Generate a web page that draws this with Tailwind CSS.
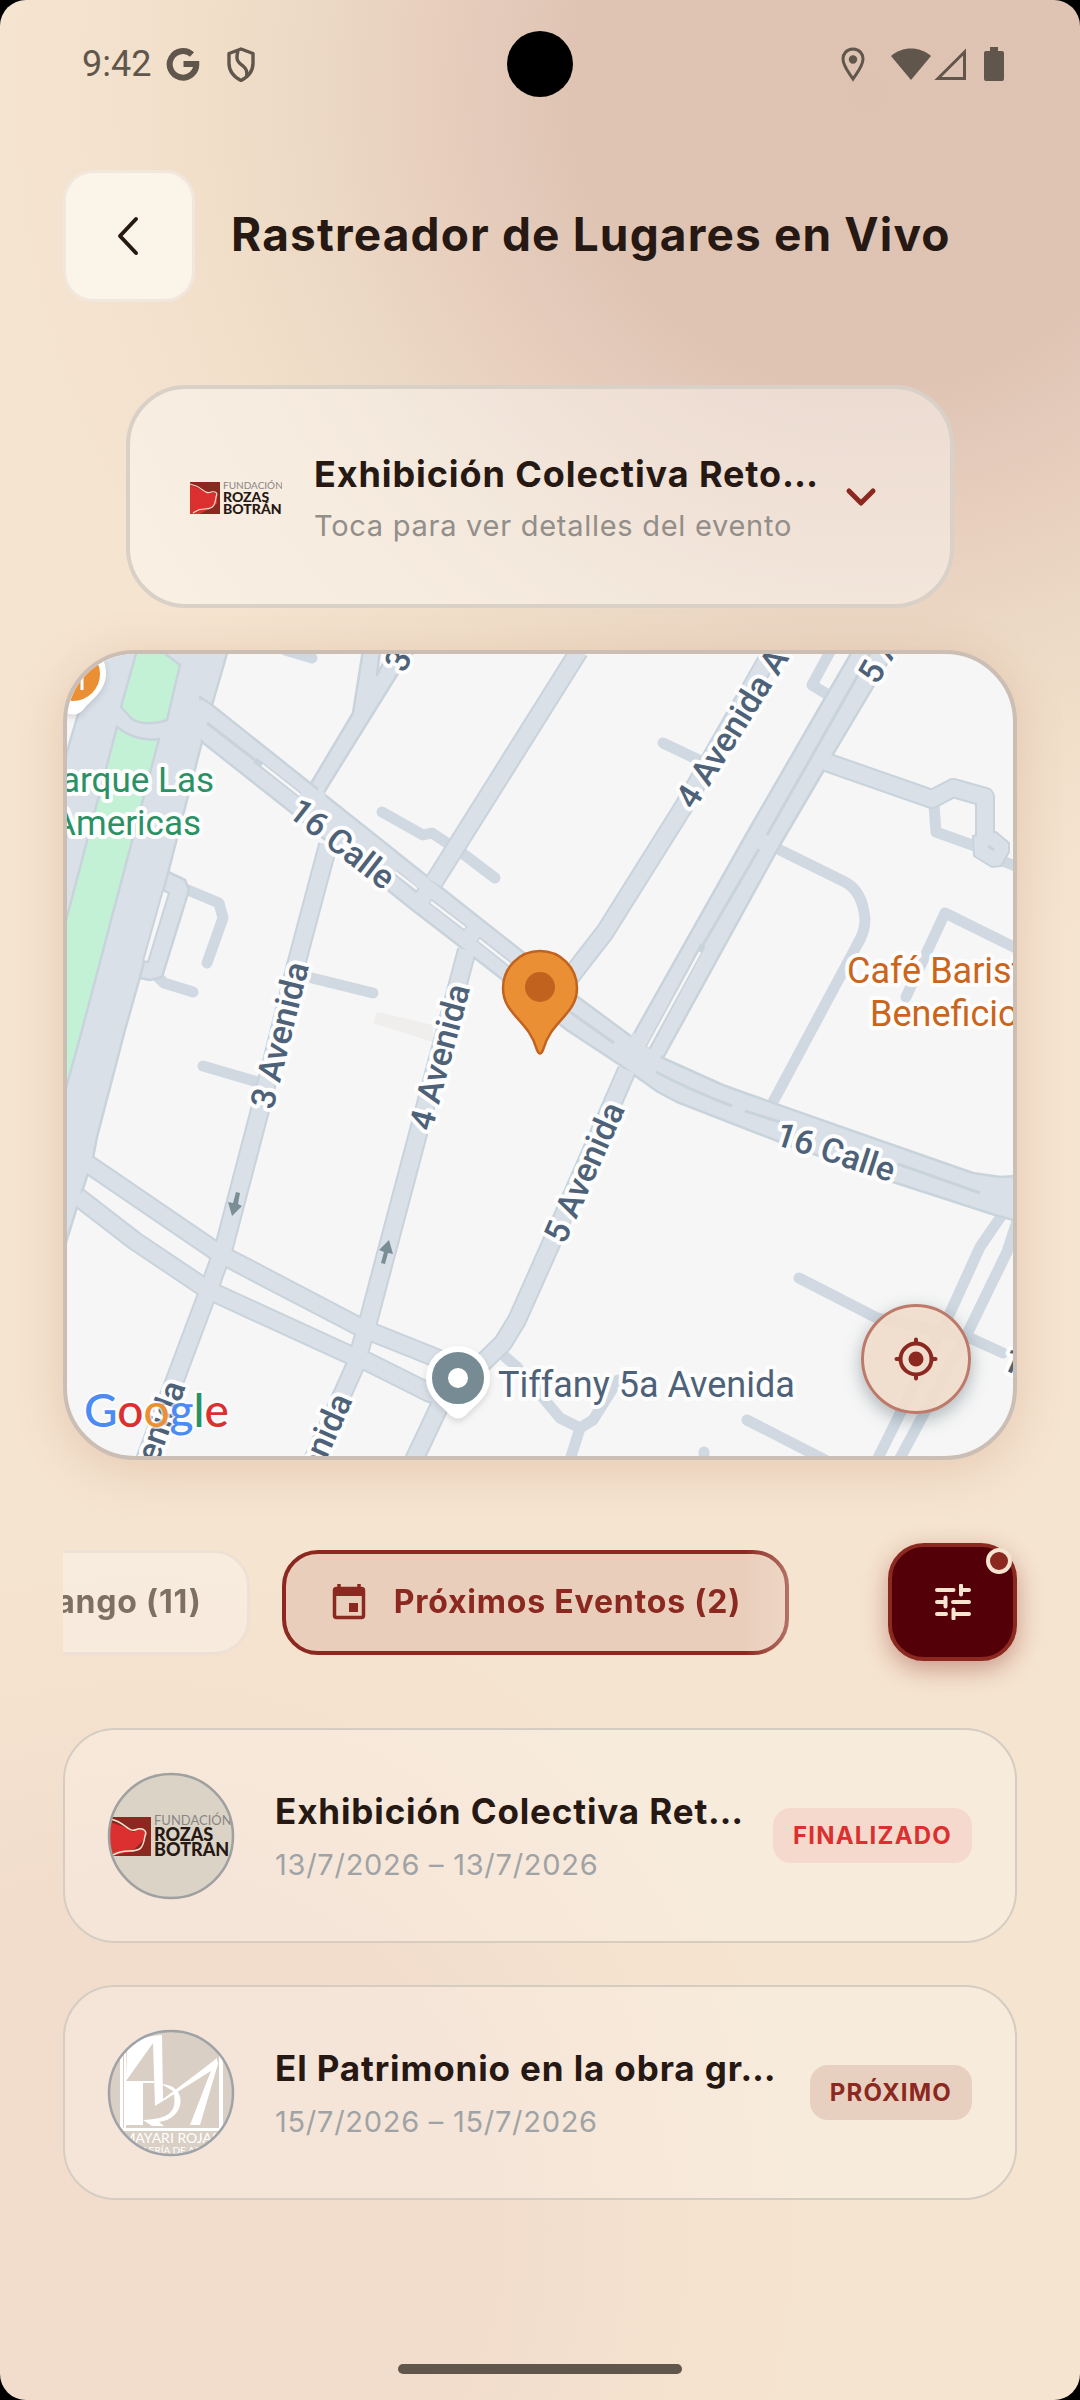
<!DOCTYPE html>
<html lang="es">

<head>
    <meta charset="UTF-8">
    <meta name="viewport" content="width=device-width, initial-scale=1.0">
    <title>Rastreador de Lugares en Vivo</title>
    <script src="https://cdn.jsdelivr.net/npm/@tailwindcss/browser@4"></script>
</head>

<body class="bg-black font-['Inter',sans-serif] text-[#261813]">
<div class="min-h-screen flex flex-col rounded-[26px] overflow-hidden bg-[#f5e4d0] bg-[radial-gradient(circle_860px_at_870px_90px,#dec2b2_0,#dfc4b4_34%,#e8cfbe_52%,#ecd9c5_65%,#f1dfca_78%,#f5e4d000_100%),radial-gradient(circle_660px_at_140px_2230px,#f2dccb_0,#f2dccb_45%,#f5e4d000_100%)]">

    <!-- status bar -->
    <div class="relative h-32 flex items-center justify-between px-[76px] text-[#60564c]">
        <div class="flex items-center pl-1.5">
            <span class="font-['Roboto',sans-serif] text-4xl">9:42</span>
            <svg class="w-9 h-9 ml-3.5" viewBox="0 0 36 36" fill="none" stroke="currentColor" stroke-width="6">
                <path d="M27 8.500A13.300 13.300 0 1 0 31.300 18H18.500"/>
            </svg>
            <svg class="w-9 h-9 ml-5" viewBox="0 0 36 36" fill="none" stroke="currentColor" stroke-width="3.400" stroke-linejoin="round">
                <path d="M20 3L32 7.500V17C32 25 27 31 20 34.500C13 31 8 25 8 17V7.500Z"/>
                <path d="M17 5C14 15 18 17 22 20C26 23 26.500 26 25.500 30"/>
            </svg>
        </div>
        <span class="absolute left-1/2 top-[31px] -translate-x-1/2 size-[66px] rounded-full bg-black"></span>
        <div class="flex items-center">
            <svg class="w-6 h-9" viewBox="0 0 24 36">
                <path d="M12 3C5.500 3 2 8 2 13C2 20 7.500 26 12 33C16.500 26 22 20 22 13C22 8 18.500 3 12 3Z" fill="none" stroke="currentColor" stroke-width="3"/>
                <circle cx="12" cy="13.500" r="4.200" fill="currentColor"/>
            </svg>
            <svg class="w-10 h-9 ml-[26px]" viewBox="0 0 40 36" fill="currentColor"><path d="M0 10C11 0 29 0 40 10L20 34Z"/></svg>
            <svg class="w-8 h-9 ml-[3px]" viewBox="0 0 32 36"><path d="M4 32.500H30.500V6Z" fill="none" stroke="currentColor" stroke-width="3"/></svg>
            <svg class="w-5 h-9 ml-[18px]" viewBox="0 0 20 36" fill="currentColor"><path d="M6 1H14V5H18Q20 5 20 7V33Q20 35 18 35H2Q0 35 0 33V7Q0 5 2 5H6Z"/></svg>
        </div>
    </div>

    <main class="flex-1 flex flex-col px-[63px] pt-[42px]">

        <header class="flex items-center gap-9">
            <button aria-label="Volver" class="shrink-0 size-[132px] rounded-[30px] border-3 border-[#f1e7dd] bg-[#fbf4e9] flex items-center justify-center">
                <svg class="w-12 h-12" viewBox="0 0 48 48" fill="none" stroke="#261813" stroke-width="4" stroke-linecap="round" stroke-linejoin="round"><path d="M31 7L15 24L31 41"/></svg>
            </button>
            <h1 class="pb-1 text-[46px] leading-[60px] font-bold tracking-wide whitespace-nowrap">Rastreador de Lugares en Vivo</h1>
        </header>

        <!-- selected event -->
        <button class="mt-[83px] mx-[63px] h-[223px] rounded-[60px] border-4 border-[#d9d1c7] bg-white/40 flex items-center text-left pl-[60px] pr-[70px]">
            <svg class="shrink-0 w-[92px] h-9" viewBox="0 0 92 36">
                <rect y="3" width="30" height="32" fill="#8b2820"/>
                <path d="M0 6L12 11L27 15L27 25L10 35H0Z" fill="#dc3030"/>
                <path d="M0 5C14 8 14 16 21 13C26 12 28 14 26 18C25 27 23 30 14 30C8 30 6 32 3 34" fill="none" stroke="#f5e4d0" stroke-width="1.200"/>
                <text x="33" y="10" font-family="Lato, sans-serif" font-size="10" fill="#8a8684">FUNDACIÓN</text>
                <text x="33" y="23" font-family="Lato, sans-serif" font-size="14" font-weight="900" fill="#261813">ROZAS</text>
                <text x="33" y="35" font-family="Lato, sans-serif" font-size="14" font-weight="900" fill="#261813">BOTRÁN</text>
            </svg>
            <span class="flex-1 ml-8 pt-1 whitespace-nowrap">
                <span class="block text-[36px] leading-[48px] font-bold tracking-wide">Exhibición Colectiva Reto…</span>
                <span class="block mt-1.5 text-[29px] leading-[44px] tracking-wide text-[#928e8a]">Toca para ver detalles del evento</span>
            </span>
            <svg class="shrink-0 w-9 h-9" viewBox="0 0 36 36" fill="none" stroke="#8b2820" stroke-width="5" stroke-linecap="round" stroke-linejoin="round"><path d="M5 12L17 24L29 12"/></svg>
        </button>

        <!-- map -->
        <section class="relative mt-[42px] h-[810px] rounded-[72px] border-4 border-[#cbbfb5] bg-[#f6f6f6] overflow-hidden shadow-[0_8px_50px_rgba(170,90,60,0.2)]">
            <svg class="w-full h-full" viewBox="67 654 946 802" preserveAspectRatio="xMidYMid slice" fill="none" font-family="Roboto, sans-serif">
                <path d="M377 1012L433 1025V1042L373 1023Z" fill="#f0eeec"/>

                <!-- lanes -->
                <g stroke="#d0d9e2" stroke-width="11" stroke-linecap="round" stroke-linejoin="round">
                    <path d="M780 850L843 881Q863 890 865 920Q865 932 857 945L773 1102"/>
                    <path d="M906 997L945 913L1020 950"/>
                    <path d="M832 648L812 685L830 696"/>
                    <path d="M663 743L705 763"/>
                    <path d="M285 650L312 658"/>
                    <path d="M382 812L423 835L432 833L462 853L495 878"/>
                    <path d="M188 890L219 903L223 918L207 963"/>
                    <path d="M158 977L164 983L193 992"/>
                    <path d="M312 978L373 993"/>
                    <path d="M203 1066L258 1082"/>
                    <path d="M503 1355L517 1367L560 1418L580 1428L593 1420L618 1380M580 1428L570 1460"/>
                    <path d="M747 1420L825 1460M704 1452V1460"/>
                    <path d="M799 1278L877 1318L970 1338L1003 1353"/>
                    <path d="M1002 1215L980 1247L950 1313L877 1460"/>
                    <path d="M1018 1218L1007 1252L970 1328L898 1462"/>
                    <path d="M934 805L936 832L975 846M1000 860L1020 868"/>
                </g>

                <!-- street casings -->
                <g stroke="#c9d3db" stroke-width="20" stroke-linejoin="round">
                    <path d="M328 845L296 965L260 1110L224 1247L205 1300L175 1380L145 1460"/>
                    <path d="M467 950L419 1130L368 1322L355 1366L313 1460"/>
                    <path d="M579 651L434 882"/>
                    <path d="M627 1070L550 1246L517 1320L503 1343L465 1380"/>
                    <path d="M775 646L684 806L605 932L560 990"/>
                    <path d="M88 1164L214 1250L228 1258L358 1326L374 1333L434 1357L470 1372"/>
                    <path d="M78 1197L135 1241L202 1286L217 1294L350 1355L366 1361L430 1393L462 1405"/>
                    <path d="M440 1405L414 1460"/>
                    <path d="M826 762L932 799L953 788L985 797V837"/>
                </g>
                <g fill="#d9e0e8" stroke="#c9d3db" stroke-width="2.500" stroke-linejoin="round">
                    <path d="M363 650H380L377 675L390 650H415L397 675L323 794L310 785L353 713Z"/>
                    <path d="M160 868L185 880L189 890L162 977L150 980L135 977Z"/>
                    <path d="M60 775L77 718L97 650H228L212 705L202 742L168 873L140 977L125 1030L97 1137L93 1158L77 1207L60 1262Z"/>
                    <path d="M200 697L212 705L310 783L428 877L523 952L578 997L632 1037L663 1058L723 1085L745 1093L870 1137L973 1173L1000 1177L1020 1176V1222L995 1215L893 1182L780 1142L677 1102L658 1092L620 1065L567 1030L503 980L458 945L410 908L297 817L202 742Z"/>
                    <path d="M853 650L825 698L747 833L632 1037L663 1058L780 845L824 770L832 756L895 650Z"/>
                </g>
                <path d="M190 695L208 704L214 712L205 741L180 730Z" fill="#d9e0e8"/>
                <path d="M633 1032L662 1053L652 1075L625 1050Z" fill="#d9e0e8"/>
                <g stroke="#d9e0e8" stroke-width="16" stroke-linejoin="round">
                    <path d="M328 845L296 965L260 1110L224 1247L205 1300L175 1380L145 1460"/>
                    <path d="M467 950L419 1130L368 1322L355 1366L313 1460"/>
                    <path d="M579 651L434 882"/>
                    <path d="M627 1070L550 1246L517 1320L503 1343L465 1380"/>
                    <path d="M775 646L684 806L605 932L560 990"/>
                    <path d="M88 1164L214 1250L228 1258L358 1326L374 1333L434 1357L470 1372"/>
                    <path d="M78 1197L135 1241L202 1286L217 1294L350 1355L366 1361L430 1393L462 1405"/>
                    <path d="M440 1405L414 1460"/>
                    <path d="M826 762L932 799L953 788L985 797V837"/>
                </g>
                <path d="M973 836L996 832L1009 843L1009 852L1001 866L992 867L974 856Z" fill="#d9e0e8" stroke="#c9d3db" stroke-width="2"/>
                <path d="M977 830H993V842H977Z" fill="#d9e0e8"/>
                <path d="M318 790L320 784L330 806L322 818Z" fill="#d9e0e8"/>

                <!-- medians -->
                <g stroke="#c9d3db" stroke-width="3">
                    <path d="M207 723L255 760"/>
                    <path d="M870 654L767 835M759 849L700 950"/>
                    <path d="M656 1072Q690 1090 732 1106M745 1111L780 1122M898 1164L980 1193"/>
                    <path d="M570 1012L614 1043M988 846L994 850"/>
                </g>
                <g stroke="#c9d3db" stroke-width="6">
                    <path d="M255 760L300 795M395 872L418 891M430 901L466 929M478 939L512 966M703 945L648 1048"/>
                </g>
                <g stroke="#f6f6f6" stroke-width="2.500">
                    <path d="M262 765L300 795M395 872L417 889M431 902L465 928M479 940L512 966M700 952L648 1047"/>
                </g>
                <path d="M163 890L169 893L148 962L143 961Z" fill="#f6f6f6" stroke="#c9d3db" stroke-width="2"/>

                <!-- park -->
                <g fill="#c3f1d6" stroke="#c9d3db" stroke-width="2.500">
                    <path d="M137 650H160L180 665L167 720Q145 727 132 719L121 707Z"/>
                    <path d="M117 727Q136 742 159 739L82 1030L60 1110V945L67 917Z"/>
                </g>

                <!-- one way arrows -->
                <g fill="#7a8e95">
                    <path d="M236 1192L240 1193L238 1204L242 1206L232 1216L228 1202L233 1203Z"/>
                    <path d="M385 1264L381 1263L384 1252L379 1250L389 1240L393 1254L388 1253Z"/>
                </g>

                <!-- street names -->
                <g font-size="34" font-weight="500" fill="#4d6278" stroke="#fdfdfd" stroke-width="8" stroke-linejoin="round" paint-order="stroke">
                    <text transform="translate(335 853) rotate(38)" text-anchor="middle">16 Calle</text>
                    <text transform="translate(832 1163) rotate(18)" text-anchor="middle">16 Calle</text>
                    <text transform="translate(291 1038) rotate(-76)" text-anchor="middle">3 Avenida</text>
                    <text transform="translate(451 1060) rotate(-75)" text-anchor="middle">4 Avenida</text>
                    <text transform="translate(595 1177) rotate(-66)" text-anchor="middle">5 Avenida</text>
                    <text transform="translate(694 811) rotate(-58)">4 Avenida A</text>
                    <text transform="translate(877 686) rotate(-60)">5 Avenida</text>
                    <text transform="translate(404 674) rotate(-62)">3 Avenida</text>
                    <text transform="translate(186 1386) rotate(-70)" text-anchor="end">3 Avenida</text>
                    <text transform="translate(353 1400) rotate(-66)" text-anchor="end">4 Avenida</text>
                    <text transform="translate(1000 1368) rotate(24)">17 Calle</text>
                </g>

                <!-- places -->
                <g font-size="35" stroke="#fdfdfd" stroke-width="8" stroke-linejoin="round" paint-order="stroke">
                    <text x="214" y="792" text-anchor="end" fill="#2a9165">Parque Las</text>
                    <text x="201" y="835" text-anchor="end" fill="#2a9165">Americas</text>
                    <text x="847" y="983" font-size="36" fill="#cb651b">Café Barista</text>
                    <text x="870" y="1026" font-size="36" fill="#cb651b">Beneficio</text>
                    <text x="498" y="1397" font-size="36" fill="#4d6278">Tiffany 5a Avenida</text>
                </g>
                <g class="drop-shadow-md">
                    <path d="M73 640A33 33 0 0 1 106 673C106 692 90 700 83 710Q75 718 65 712L50 690Z" fill="#fff"/>
                    <circle cx="73" cy="674" r="27" fill="#eb8f34"/>
                    <path d="M82 676V690" stroke="#fff" stroke-width="3"/>
                </g>
                <g class="drop-shadow-md">
                    <path d="M458 1346A32 32 0 0 1 490 1378C490 1396 476 1404 466 1415Q458 1422 450 1415C440 1404 426 1396 426 1378A32 32 0 0 1 458 1346Z" fill="#fff"/>
                    <circle cx="458" cy="1378" r="18" stroke="#768b94" stroke-width="16"/>
                </g>

                <!-- venue pin -->
                <path d="M540 951A37 37 0 0 1 577 988C577 1015 551 1020 543 1050Q540 1057 537 1050C529 1020 503 1015 503 988A37 37 0 0 1 540 951Z" fill="#eb8f34" stroke="#c1631f" stroke-width="2.500"/>
                <circle cx="540" cy="987" r="15" fill="#c1631f"/>

                <text x="84" y="1427" font-family="Lato, sans-serif" font-size="46" font-weight="500" stroke="#fff" stroke-width="4" stroke-opacity="0.7" paint-order="stroke"><tspan fill="#4c8bf5">G</tspan><tspan fill="#dc3030">o</tspan><tspan fill="#eb8f34">o</tspan><tspan fill="#4c8bf5">g</tspan><tspan fill="#2a9165">l</tspan><tspan fill="#dc3030">e</tspan></text>
            </svg>

            <button aria-label="Mi ubicación" class="absolute right-[42px] bottom-[42px] size-[110px] rounded-full border-3 border-[#bd7a6a] bg-[#efdccb]/95 flex items-center justify-center shadow-[0_6px_18px_rgba(60,80,90,0.4)]">
                <svg class="w-11 h-11" viewBox="0 0 44 44" fill="none" stroke="#8b2820" stroke-width="4" stroke-linecap="round">
                    <circle cx="22" cy="22" r="15.500"/>
                    <circle cx="22" cy="22" r="7.500" fill="#8b2820" stroke="none"/>
                    <path d="M22 2.500V6M22 38V41.500M2.500 22H6M38 22H41.500"/>
                </svg>
            </button>
        </section>

        <!-- filters -->
        <div class="mt-[83px] flex items-center gap-8">
            <div class="flex-1 min-w-0 overflow-hidden flex justify-end gap-8 pr-[67px] mask-r-from-86% mask-r-to-100%">
                <button class="shrink-0 h-[105px] px-[45px] rounded-[36px] border-3 border-[#eee0d5] bg-white/30 text-[#7e7064] text-[32px] font-bold tracking-wide whitespace-nowrap">En Rango (11)</button>
                <button class="shrink-0 h-[105px] px-[44px] rounded-[36px] border-4 border-[#8b2820] bg-[#e9cebc] text-[#8b2820] text-[32px] font-bold tracking-wide whitespace-nowrap flex items-center gap-[26px]">
                    <svg class="w-[38px] h-[38px]" viewBox="0 0 38 38">
                        <path d="M9 1V6M29 1V6" stroke="currentColor" stroke-width="3.500"/>
                        <rect x="4.500" y="5.500" width="29" height="29" rx="2" fill="none" stroke="currentColor" stroke-width="3.500"/>
                        <path d="M4 5H34V13H4Z" fill="currentColor"/>
                        <rect x="19" y="20" width="9" height="9" fill="currentColor"/>
                    </svg>
                    Próximos Eventos (2)
                </button>
            </div>
            <button aria-label="Filtros" class="relative shrink-0 w-[129px] h-[118px] rounded-[36px] border-4 border-[#8b2820] bg-[#540008] flex items-center justify-center shadow-[0_8px_24px_rgba(139,40,32,0.4)]">
                <svg class="w-9 h-9" viewBox="0 0 36 36" fill="none" stroke="#f5e4d0" stroke-width="4" stroke-linecap="round">
                    <path d="M2 6H18.500M26 1.500V10.500M26 6H34"/>
                    <path d="M2 18H10.500M10.500 13.500V22.500M18 18H34"/>
                    <path d="M2 30H11M18.500 25.500V34.500M18.500 30H34"/>
                </svg>
                <span class="absolute right-px top-px size-[26px] rounded-full border-4 border-[#f5e4d0] bg-[#8b2820]"></span>
            </button>
        </div>

        <!-- events -->
        <ul class="mt-[67px] flex flex-col gap-[42px]">
            <li class="h-[215px] rounded-[52px] border-2 border-[#d6cdc2] bg-white/25 flex items-center pl-[42px] pr-[43px]">
                <svg class="shrink-0 w-32 h-32" viewBox="0 0 128 128">
                    <clipPath id="av1"><circle cx="64" cy="64" r="62"/></clipPath>
                    <circle cx="64" cy="64" r="62.500" fill="#dcd3c7"/>
                    <g clip-path="url(#av1)">
                        <rect x="3" y="45" width="41" height="39" fill="#8b2820"/>
                        <path d="M3 50L20 56L26 60L34 57L39 60L37 68L24 80L3 84Z" fill="#dc3030"/>
                        <path d="M3 47C20 50 20 62 31 57C38 56 40 60 38 64C36 77 33 79 22 79C14 79 11 80 6 83" fill="none" stroke="#f5e4d0" stroke-width="1.500"/>
                        <text x="47" y="53" font-family="Lato, sans-serif" font-size="13" fill="#8a8684">FUNDACIÓN</text>
                        <text x="47" y="69" font-family="Lato, sans-serif" font-size="18" font-weight="900" fill="#261813">ROZAS</text>
                        <text x="47" y="84" font-family="Lato, sans-serif" font-size="18" font-weight="900" fill="#261813">BOTRÁN</text>
                    </g>
                    <circle cx="64" cy="64" r="62" fill="none" stroke="#9fa0a0" stroke-width="2.500"/>
                </svg>
                <div class="flex-1 ml-10 pt-0.5 whitespace-nowrap">
                    <h2 class="text-[35px] leading-[48px] font-bold tracking-wide">Exhibición Colectiva Ret…</h2>
                    <p class="mt-2 text-[29px] leading-[44px] tracking-wide text-[#9fa3a5]">13/7/2026 – 13/7/2026</p>
                </div>
                <span class="shrink-0 rounded-[18px] bg-[#f5d9cc] px-5 py-[11px] text-[24px] leading-[33px] font-bold tracking-wider text-[#dc3030]">FINALIZADO</span>
            </li>
            <li class="h-[215px] rounded-[52px] border-2 border-[#d6cdc2] bg-white/25 flex items-center pl-[42px] pr-[43px]">
                <svg class="shrink-0 w-32 h-32" viewBox="0 0 128 128">
                    <clipPath id="av2"><circle cx="64" cy="64" r="62"/></clipPath>
                    <circle cx="64" cy="64" r="62.500" fill="#d9cfc4"/>
                    <!-- gallery monogram -->
                    <g clip-path="url(#av2)" fill="#fff">
                        <path d="M0 0H128V3H0ZM13 22H16V99H112V22H116V102H13ZM17 22V99H19V22Z"/>
                        <path d="M20 19Q32 7 55 6L56 70L96 40L110 29L111 35L93 96H83L100 52L104 42L72 62L48 77L46 14L19 52Z"/>
                        <path d="M19 52H47V54H36V96H19Z"/>
                        <path d="M56 55C82 58 78 90 52 93L57 97H45L36 91C60 90 72 84 66 62L56 56Z"/>
                        <text x="64" y="114" text-anchor="middle" font-family="Lato, sans-serif" font-size="14">MAYARI ROJAS</text>
                        <text x="64" y="125" text-anchor="middle" font-family="Lato, sans-serif" font-size="10">GALERÍA DE ARTE</text>
                    </g>
                    <circle cx="64" cy="64" r="62" fill="none" stroke="#9fa3a8" stroke-width="2.500"/>
                </svg>
                <div class="flex-1 ml-10 pt-0.5 whitespace-nowrap">
                    <h2 class="text-[35px] leading-[48px] font-bold tracking-wide">El Patrimonio en la obra gr…</h2>
                    <p class="mt-2 text-[29px] leading-[44px] tracking-wide text-[#9fa3a5]">15/7/2026 – 15/7/2026</p>
                </div>
                <span class="shrink-0 rounded-[18px] bg-[#e8d0c0] px-5 py-[11px] text-[24px] leading-[33px] font-bold tracking-wider text-[#8b2820]">PRÓXIMO</span>
            </li>
        </ul>
    </main>

    <div class="self-center mb-[26px] w-[284px] h-2.5 rounded-full bg-[#60564c]"></div>
</div>
</body>

</html>
